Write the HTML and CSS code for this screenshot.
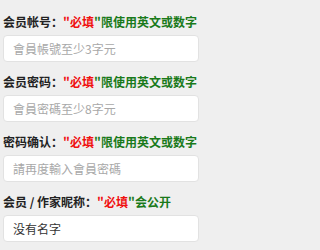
FILE: index.html
```html
<!DOCTYPE html>
<html lang="zh">
<head>
<meta charset="utf-8">
<link rel="stylesheet" href="styles.css">
</head>
<body>
<form class="form">
  <div class="group">
    <label class="label">会员帐号：<span class="req">"必填</span><span class="note">"限使用英文或数字</span></label>
    <input class="field" type="text" placeholder="會員帳號至少3字元">
  </div>
  <div class="group">
    <label class="label">会员密码：<span class="req">"必填</span><span class="note">"限使用英文或数字</span></label>
    <input class="field" type="text" placeholder="會員密碼至少8字元">
  </div>
  <div class="group">
    <label class="label">密码确认：<span class="req">"必填</span><span class="note">"限使用英文或数字</span></label>
    <input class="field" type="text" placeholder="請再度輸入會員密碼">
  </div>
  <div class="group">
    <label class="label">会员 / 作家昵称：<span class="req">"必填</span><span class="note">"会公开</span></label>
    <input class="field" type="text" value="没有名字">
  </div>
</form>
</body>
</html>
```

FILE: styles.css
```css
html, body {
  margin: 0;
  padding: 0;
  background: #efefef;
}
body {
  font-family: "Noto Sans CJK SC", "Noto Sans", sans-serif;
  overflow: hidden;
}
.form {
  width: 201px;
  box-sizing: border-box;
  padding: 12px 2px 0 3px;
}
.group {
  display: flex;
  flex-direction: column;
  gap: 4px;
  margin-bottom: 10px;
}
.label {
  display: block;
  height: 19px;
  line-height: 19px;
  font-size: 12px;
  font-weight: bold;
  color: #222;
  white-space: nowrap;
}
.req {
  color: #f01010;
}
.note {
  color: #1a7a1a;
}
.field {
  box-sizing: border-box;
  width: 100%;
  height: 27px;
  margin: 0;
  padding: 0 9px;
  border: 1px solid #e2e2e2;
  border-radius: 4px;
  background: #fff;
  font-family: "Noto Sans CJK TC", "Noto Sans CJK SC", sans-serif;
  font-size: 12px;
  color: #333;
  outline: none;
}
.field::placeholder {
  color: #a8a8a8;
}
```
